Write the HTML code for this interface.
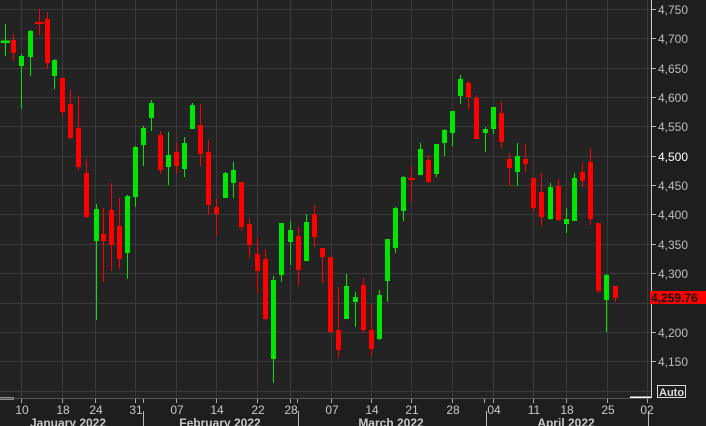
<!DOCTYPE html>
<html><head><meta charset="utf-8"><style>
html,body{margin:0;padding:0;background:#1f1f1f;width:706px;height:426px;overflow:hidden}
svg{display:block}
text{font-family:"Liberation Sans",sans-serif}
</style></head><body>
<svg width="706" height="426" viewBox="0 0 706 426" xmlns="http://www.w3.org/2000/svg">
<rect x="0" y="0" width="706" height="426" fill="#1e1e1f"/>
<rect x="0" y="0" width="651" height="398" fill="#232323"/>
<g stroke="#3a3a3a" stroke-width="1">
<path d="M0 9.5H651M0 38.5H651M0 68.5H651M0 97.5H651M0 126.5H651M0 156.5H651M0 185.5H651M0 214.5H651M0 244.5H651M0 273.5H651M0 303.5H651M0 332.5H651M0 361.5H651M0 391.5H651"/>
<path d="M21.5 0V398M62.5 0V398M95.5 0V398M135.5 0V398M176.5 0V398M216.5 0V398M257.5 0V398M290.5 0V398M331.5 0V398M371.5 0V398M411.5 0V398M452.5 0V398M493.5 0V398M533.5 0V398M566.5 0V398M607.5 0V398M647.5 0V398"/>
</g>
<path d="M651.5 0V398" stroke="#cfcfcf"/>
<path d="M0 398.5H14M630 397.5H651" stroke="#ffffff" stroke-width="2"/>
<path d="M0 398.5H651" stroke="#555" stroke-width="1"/>
<g stroke="#00e600" stroke-width="1" fill="none">
<path d="M5.5 24V56M21.5 54V109M30.5 30V76M54.5 59V89M96.5 204V320M127.5 195V279M135.5 146V207M143.5 126V166M151.5 100V131M168.5 132V185M184.5 137V177M192.5 103V129M225.5 172V198M233.5 162V198M273.5 276V383M281.5 223V282M290.5 221V265M306.5 214V261M346.5 274V319M355.5 292V327M379.5 290V340M387.5 239V302M395.5 207V253M403.5 176V221M420.5 143V175M436.5 144V177M444.5 129V156M452.5 111V146M460.5 75V104M485.5 127V152M493.5 107V134M517.5 143V186M550.5 183V220M566.5 208V233M574.5 173V221M606.5 274V332"/>
</g>
<path fill="#00e600" d="M1 40.5h9V43h-9zM19 56h5V66h-5zM28 31h5V57h-5zM52 60h5V76h-5zM94 209h5V241h-5zM125 196h5V253h-5zM133 147h5V197h-5zM141 128h5V145h-5zM149 103h5V118h-5zM166 155h5V167h-5zM182 143h5V169h-5zM190 105h5V129h-5zM223 173h5V198h-5zM231 170h5V183h-5zM271 280h5V359h-5zM279 223h5V275h-5zM288 230h5V242h-5zM304 222h5V261h-5zM344 286h5V319h-5zM353 297h5V302h-5zM377 295h5V339h-5zM385 239h5V281h-5zM393 208h5V248h-5zM401 177h5V211h-5zM418 149h5V175h-5zM434 144h5V174h-5zM442 130h5V143h-5zM450 111h5V133h-5zM458 79h5V96h-5zM483 129h5V133h-5zM491 107h5V129h-5zM515 156h5V172h-5zM548 187h5V219h-5zM564 219h5V224h-5zM572 178h5V221h-5zM604 275h5V300h-5z"/>
<g stroke="#ff0000" stroke-width="1" fill="none">
<path d="M13.5 34V61M39.5 9V35M47.5 12V69M62.5 78V116M70.5 90V139M78.5 96V170M86.5 159V218M103.5 208V282M111.5 183V271M119.5 198V269M160.5 131V174M176.5 143V174M200.5 104V166M208.5 140V215M216.5 199V236M241.5 182V231M249.5 218V258M257.5 237V293M265.5 249V320M298.5 227V286M314.5 205V247M322.5 248V283M330.5 257V333M338.5 287V358M363.5 278V333M371.5 304V356M411.5 166V202M428.5 155V183M468.5 81V109M476.5 95V139M501.5 101V148M509.5 153V186M525.5 144V172M533.5 178V212M541.5 173V226M558.5 179V221M582.5 163V187M590.5 148V225M598.5 223V293M615.5 286V302"/>
</g>
<path fill="#ff0000" d="M11 40h5V53h-5zM35 22h9V24h-9zM45 19h5V63h-5zM60 78h5V112h-5zM68 104h5V138h-5zM76 128h5V167h-5zM84 173h5V217h-5zM101 234h5V241h-5zM109 210h5V245h-5zM117 226h5V259h-5zM158 135h5V170h-5zM174 152h5V166h-5zM198 125h5V154h-5zM206 152h5V205h-5zM214 207h5V214h-5zM239 182h5V227h-5zM247 224h5V245h-5zM255 254h5V271h-5zM263 259h5V319h-5zM296 236h5V270h-5zM312 214h5V237h-5zM320 248h5V257h-5zM328 257h5V332h-5zM336 330h5V350h-5zM361 285h5V330h-5zM369 330h5V349h-5zM408 178h7V180h-7zM426 160h5V182h-5zM466 83h5V97h-5zM474 98h5V139h-5zM499 113h5V142h-5zM507 159h5V168h-5zM523 159h5V164h-5zM531 178h5V208h-5zM539 192h5V217h-5zM556 186h5V220h-5zM580 172h5V181h-5zM588 162h5V219h-5zM596 223h5V291h-5zM613 286h5V298h-5z"/>
<g stroke="#bbb"><path d="M652 9.5h4M652 38.5h4M652 68.5h4M652 97.5h4M652 126.5h4M652 156.5h4M652 185.5h4M652 214.5h4M652 244.5h4M652 273.5h4M652 303.5h4M652 332.5h4M652 361.5h4"/></g>
<g fill="#bdbdbd" font-size="12">
<text x="658" y="14">4,750</text><text x="658" y="43">4,700</text><text x="658" y="73">4,650</text><text x="658" y="102">4,600</text><text x="658" y="131">4,550</text><text x="658" y="161" fill="#fff">4,500</text><text x="658" y="190">4,450</text><text x="658" y="219">4,400</text><text x="658" y="249">4,350</text><text x="658" y="278">4,300</text><text x="658" y="337">4,200</text><text x="658" y="366">4,150</text>
</g>
<rect x="650" y="291" width="56" height="13" fill="#ff0000"/>
<text x="651" y="302" font-size="12" font-weight="bold" fill="#111">4,259.76</text>
<rect x="657.5" y="385.5" width="28" height="12" fill="none" stroke="#ddd"/>
<text x="659" y="396" font-size="11" font-weight="bold" fill="#ddd">Auto</text>
<g stroke="#aaa"><path d="M21.5 399v4M62.5 399v4M95.5 399v4M135.5 399v4M143.5 399v4M176.5 399v4M216.5 399v4M257.5 399v4M290.5 399v4M297.5 399v4M331.5 399v4M371.5 399v4M411.5 399v4M452.5 399v4M484.5 399v4M493.5 399v4M533.5 399v4M566.5 399v4M607.5 399v4M647.5 399v4"/>
<path d="M143.5 411v15M298.5 411v15M486.5 411v15M648.5 411v15" stroke="#bbb"/></g>
<g fill="#c8c8c8" font-size="12" text-anchor="middle">
<text x="22" y="414">10</text><text x="63" y="414">18</text><text x="96" y="414">24</text><text x="136" y="414">31</text><text x="177" y="414">07</text><text x="217" y="414">14</text><text x="258" y="414">22</text><text x="291" y="414">28</text><text x="332" y="414">07</text><text x="372" y="414">14</text><text x="412" y="414">21</text><text x="453" y="414">28</text><text x="494" y="414">04</text><text x="534" y="414">11</text><text x="567" y="414">18</text><text x="608" y="414">25</text><text x="647" y="414">02</text>
</g>
<g fill="#c8c8c8" font-size="12" font-weight="bold" text-anchor="middle">
<text x="68" y="427">January 2022</text><text x="220" y="427">February 2022</text><text x="391" y="427">March 2022</text><text x="566" y="427">April 2022</text>
</g>
</svg>
</body></html>
